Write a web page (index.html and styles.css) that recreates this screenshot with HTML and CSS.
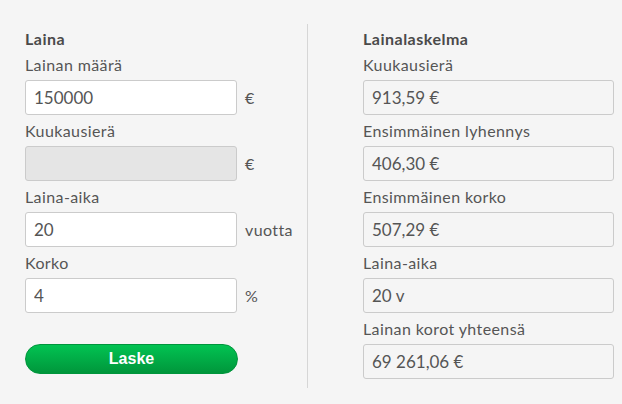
FILE: index.html
```html
<!DOCTYPE html>
<html lang="fi">
<head>
    <meta charset="UTF-8">
    <title>Lainalaskuri</title>
    <link rel="stylesheet" href="styles.css">
</head>
<body>
    <div class="calc">
        <div class="col col-input">
            <h2>Laina</h2>
            <label class="label" for="amount">Lainan määrä</label>
            <div class="field">
                <input id="amount" class="box" type="text" value="150000">
                <span class="unit">€</span>
            </div>
            <label class="label" for="monthly">Kuukausierä</label>
            <div class="field">
                <input id="monthly" class="box" type="text" disabled>
                <span class="unit">€</span>
            </div>
            <label class="label" for="years">Laina-aika</label>
            <div class="field">
                <input id="years" class="box" type="text" value="20">
                <span class="unit">vuotta</span>
            </div>
            <label class="label" for="rate">Korko</label>
            <div class="field">
                <input id="rate" class="box" type="text" value="4">
                <span class="unit">%</span>
            </div>
            <button class="btn">Laske</button>
        </div>

        <div class="col col-result">
            <h2>Lainalaskelma</h2>
            <div class="label">Kuukausierä</div>
            <div class="box result">913,59 €</div>
            <div class="label">Ensimmäinen lyhennys</div>
            <div class="box result">406,30 €</div>
            <div class="label">Ensimmäinen korko</div>
            <div class="box result">507,29 €</div>
            <div class="label">Laina-aika</div>
            <div class="box result">20 v</div>
            <div class="label">Lainan korot yhteensä</div>
            <div class="box result">69 261,06 €</div>
        </div>
    </div>
</body>
</html>
```

FILE: styles.css
```css
* {
    margin: 0;
    padding: 0;
    box-sizing: border-box;
}

body {
    font-family: Lato, 'Open Sans', sans-serif;
    background: #f5f5f5;
    color: #555;
    height: 404px;
    overflow: hidden;
}

.calc {
    display: flex;
    padding-top: 24px;
}

.col {
    display: flex;
    flex-direction: column;
    align-items: flex-start;
    padding-top: 5px;
}

.col-input {
    width: 308px;
    padding-left: 25px;
    padding-bottom: 14px;
    border-right: 1px solid #d6d6d6;
}

.col-result {
    padding-left: 55px;
}

h2 {
    font-size: 16px;
    font-weight: 700;
    line-height: 20px;
    letter-spacing: 0.5px;
    color: #4a4a4a;
}

.label {
    display: block;
    font-size: 16px;
    line-height: 20px;
    letter-spacing: 0.4px;
    padding: 6px 0 5px;
    color: #555;
}

.field {
    display: flex;
    align-items: center;
    gap: 8px;
}

.box {
    height: 35px;
    border: 1px solid #cbcbcb;
    border-radius: 3px;
    font-family: inherit;
    font-size: 17px;
    color: #555;
    padding: 0 8px;
}

input.box {
    width: 212px;
    background: #fff;
    outline: none;
}

input.box:disabled {
    background: #e5e5e5;
}

.unit {
    font-size: 16px;
    letter-spacing: 0.4px;
    color: #555;
}

.result {
    width: 251px;
    background: #f5f5f5;
    display: flex;
    align-items: center;
}

.btn {
    margin-top: 31px;
    width: 213px;
    height: 30px;
    border: 1px solid #00953c;
    border-radius: 15px;
    background: linear-gradient(#02c352, #00963b);
    color: #fff;
    font-family: 'Liberation Sans', Arial, sans-serif;
    font-weight: 700;
    font-size: 16px;
    cursor: pointer;
}
```
